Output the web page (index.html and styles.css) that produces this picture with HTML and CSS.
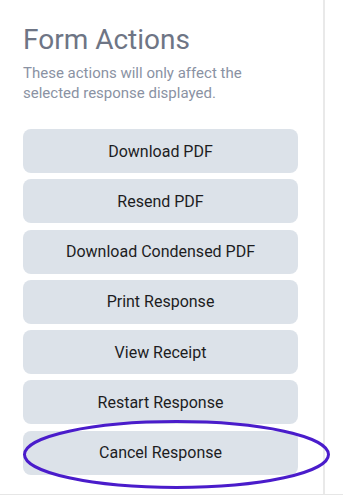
FILE: index.html
```html
<html>
<head>
    <meta charset="utf-8">
    <link rel="stylesheet" href="styles.css">
</head>

<body>
    <div class="page">
        <div class="panel">
            <h1 class="title">Form Actions</h1>
            <p class="hint">These actions will only affect the selected response displayed.</p>
            <div class="actions">
                <button type="button" class="button">Download PDF</button>
                <button type="button" class="button">Resend PDF</button>
                <button type="button" class="button">Download Condensed PDF</button>
                <button type="button" class="button">Print Response</button>
                <button type="button" class="button">View Receipt</button>
                <button type="button" class="button">Restart Response</button>
                <div class="marked">
                    <button type="button" class="button">Cancel Response</button>
                    <svg class="circle" width="309" height="72" viewBox="0 0 309 72">
                        <ellipse cx="154.5" cy="34.5" rx="152" ry="33" fill="none" stroke="#4a1ccb" stroke-width="3"/>
                    </svg>
                </div>
            </div>
        </div>
    </div>
</body>
</html>
```

FILE: styles.css
```css
body {
    margin: 0;
    background: #fff;
    font-family: Roboto, "Noto Sans", sans-serif;
}

.page {
    height: 494px;
    border-bottom: 1px solid #e6e6e6;
}

.panel {
    height: 100%;
    padding: 0 25px 0 23px;
    box-sizing: content-box;
    width: 275px;
    border-right: 2px solid #e9e9e9;
}

.title {
    margin: 0;
    padding-top: 23px;
    font-size: 28px;
    line-height: 34px;
    font-weight: 400;
    color: #6e7585;
}

.hint {
    margin: 6px 0 0 0;
    font-size: 15px;
    line-height: 20px;
    color: #8a92a3;
}

.actions {
    display: flex;
    flex-direction: column;
    gap: 6.3px;
    margin-top: 26px;
}

.button {
    display: block;
    width: 100%;
    height: 44px;
    border: none;
    border-radius: 8px;
    background-color: #dce2e9;
    color: #1d1d1f;
    font-family: Roboto, "Noto Sans", sans-serif;
    font-size: 16px;
    padding: 0;
}

.marked {
    position: relative;
}

    .marked .circle {
        position: absolute;
        left: -1px;
        top: -11px;
        pointer-events: none;
    }
```
